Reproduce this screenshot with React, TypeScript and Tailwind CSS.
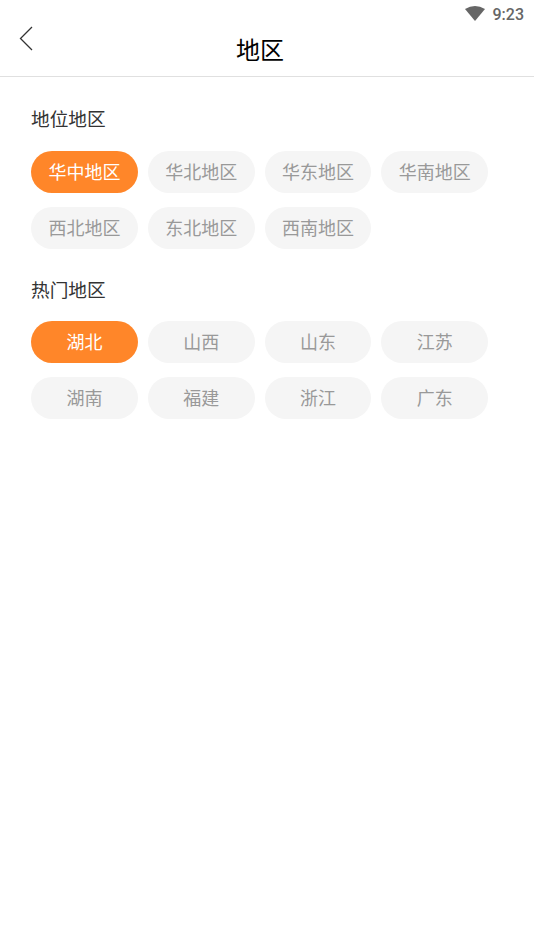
const font = { fontFamily: '"Noto Sans CJK SC", sans-serif' }

function Chip({ label, active }: { label: string; active?: boolean }) {
  return (
    <div
      className={
        active
          ? "h-[42px] w-[106.8px] pb-[2px] rounded-full bg-[#ff8629] text-white text-lg flex items-center justify-center"
          : "h-[42px] w-[106.8px] pb-[2px] rounded-full bg-[#f5f5f5] text-[#999999] text-lg flex items-center justify-center"
      }
    >
      {label}
    </div>
  )
}

function Section({ title, items }: { title: string; items: string[] }) {
  return (
    <section className="mb-[27px]">
      <h2 className="text-[18.7px] leading-[26px] text-[#333333] font-normal mb-[19.6px]">{title}</h2>
      <div className="flex flex-wrap gap-x-[10px] gap-y-[14px]">
        {items.map((item, i) => (
          <Chip key={item} label={item} active={i === 0} />
        ))}
      </div>
    </section>
  )
}

export default function App() {
  return (
    <div className="w-[534px] h-[949px] bg-white overflow-hidden" style={font}>
      {/* status bar */}
      <div className="h-[24px] flex items-center justify-end pr-[10px] pt-[5px] gap-[8px]">
        <svg className="mb-[2px]" width="20" height="16" viewBox="0 0 20 16">
          <path d="M0 3 Q10 -3 20 3 L10 15 Z" fill="#666666" />
        </svg>
        <span className="text-[#666666] text-base font-medium" style={{ fontFamily: "Roboto, sans-serif" }}>
          9:23
        </span>
      </div>

      {/* header */}
      <header className="relative h-[53px] border-b border-[#e0e0e0] flex items-center justify-center pr-[14px] pb-[3px]">
        <svg className="absolute left-[19px] top-[2px]" width="14" height="25" viewBox="0 0 14 25" fill="none">
          <path d="M13 1 L1.5 12.5 L13 24" stroke="#333333" strokeWidth="1.3" />
        </svg>
        <h1 className="text-[24px] text-black font-normal">地区</h1>
      </header>

      <main className="pt-[28px] pl-[31px] pr-[40px]">
        <Section title="地位地区" items={["华中地区", "华北地区", "华东地区", "华南地区", "西北地区", "东北地区", "西南地区"]} />
        <Section title="热门地区" items={["湖北", "山西", "山东", "江苏", "湖南", "福建", "浙江", "广东"]} />
      </main>
    </div>
  )
}
